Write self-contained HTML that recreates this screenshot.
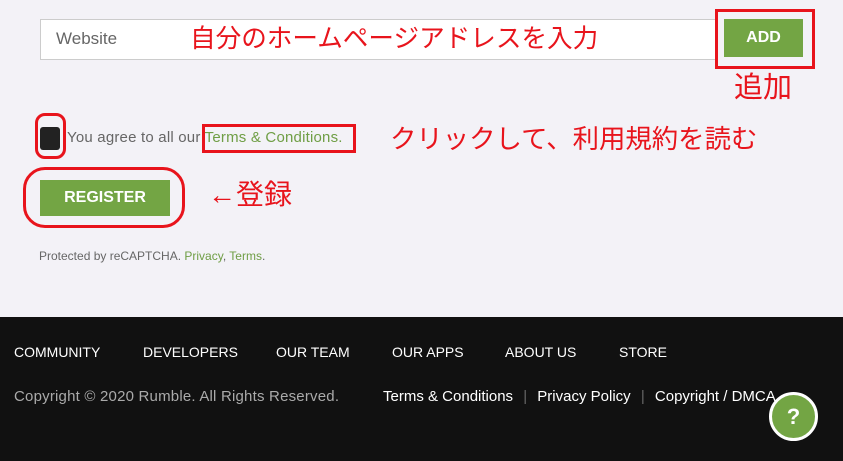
<!DOCTYPE html><html><head><meta charset="utf-8"><style>
*{margin:0;padding:0;box-sizing:border-box}
body{width:843px;height:461px;background:#f3f2f7;position:relative;overflow:hidden;font-family:"Liberation Sans","Noto Sans CJK JP",sans-serif}
.a{position:absolute;white-space:nowrap}
.jp{color:#e8141c;line-height:1;font-family:"Liberation Sans","Noto Sans CJK JP",sans-serif}
.rb{position:absolute;border:3px solid #e8141c}
.g{color:#6f9e45}
.btn{position:absolute;background:#73a544;color:#fff;font-weight:bold;display:flex;align-items:center;justify-content:center}
.f{color:#fff;font-size:14px}
</style></head><body>
<div class="a" style="left:40px;top:19px;width:676px;height:41px;background:#fff;border:1px solid #ccc"></div>
<div class="a" style="left:56px;top:29px;font-size:17px;color:#666">Website</div>
<div class="a jp" style="left:190px;top:27px;font-size:25.6px">自分のホームページアドレスを入力</div>
<div class="btn" style="left:724px;top:19px;width:79px;height:38px;font-size:16px">ADD</div>
<div class="rb" style="left:715px;top:9px;width:100px;height:60px"></div>
<div class="a jp" style="left:734px;top:74px;font-size:29px">追加</div>
<div class="a" style="left:40px;top:127px;width:20px;height:23px;background:#222;border-radius:3px"></div>
<div class="rb" style="left:35px;top:113px;width:31px;height:46px;border-radius:10px"></div>
<div class="a" style="left:67px;top:129px;font-size:15px;color:#666;letter-spacing:0.2px">You agree to all our <span class="g">Terms &amp; Conditions.</span></div>
<div class="rb" style="left:202px;top:124px;width:154px;height:29px"></div>
<div class="a jp" style="left:390px;top:126px;font-size:26.4px">クリックして、利用規約を読む</div>
<div class="btn" style="left:40px;top:180px;width:130px;height:36px;font-size:16px">REGISTER</div>
<div class="rb" style="left:23px;top:167px;width:162px;height:61px;border-radius:22px"></div>
<div class="a jp" style="left:208px;top:181px;font-size:28px">←登録</div>
<div class="a" style="left:39px;top:249px;font-size:12px;color:#666">Protected by reCAPTCHA. <span class="g">Privacy</span>, <span class="g">Terms</span>.</div>
<div class="a" style="left:0;top:317px;width:843px;height:144px;background:#111"></div>
<div class="a f" style="left:14px;top:344px">COMMUNITY</div>
<div class="a f" style="left:143px;top:344px">DEVELOPERS</div>
<div class="a f" style="left:276px;top:344px">OUR TEAM</div>
<div class="a f" style="left:392px;top:344px">OUR APPS</div>
<div class="a f" style="left:505px;top:344px">ABOUT US</div>
<div class="a f" style="left:619px;top:344px">STORE</div>
<div class="a f" style="left:14px;top:388px;color:#aaa;font-size:15px;letter-spacing:0.2px">Copyright © 2020 Rumble. All Rights Reserved.</div>
<div class="a f" style="left:383px;top:388px;font-size:15px">Terms &amp; Conditions <span style="color:#666;margin:0 6px">|</span> Privacy Policy <span style="color:#666;margin:0 6px">|</span> Copyright / DMCA</div>
<div class="a" style="left:769px;top:392px;width:49px;height:49px;border-radius:50%;background:#73a544;border:3px solid #fff;color:#fff;font-weight:bold;font-size:22px;display:flex;align-items:center;justify-content:center">?</div>
</body></html>
